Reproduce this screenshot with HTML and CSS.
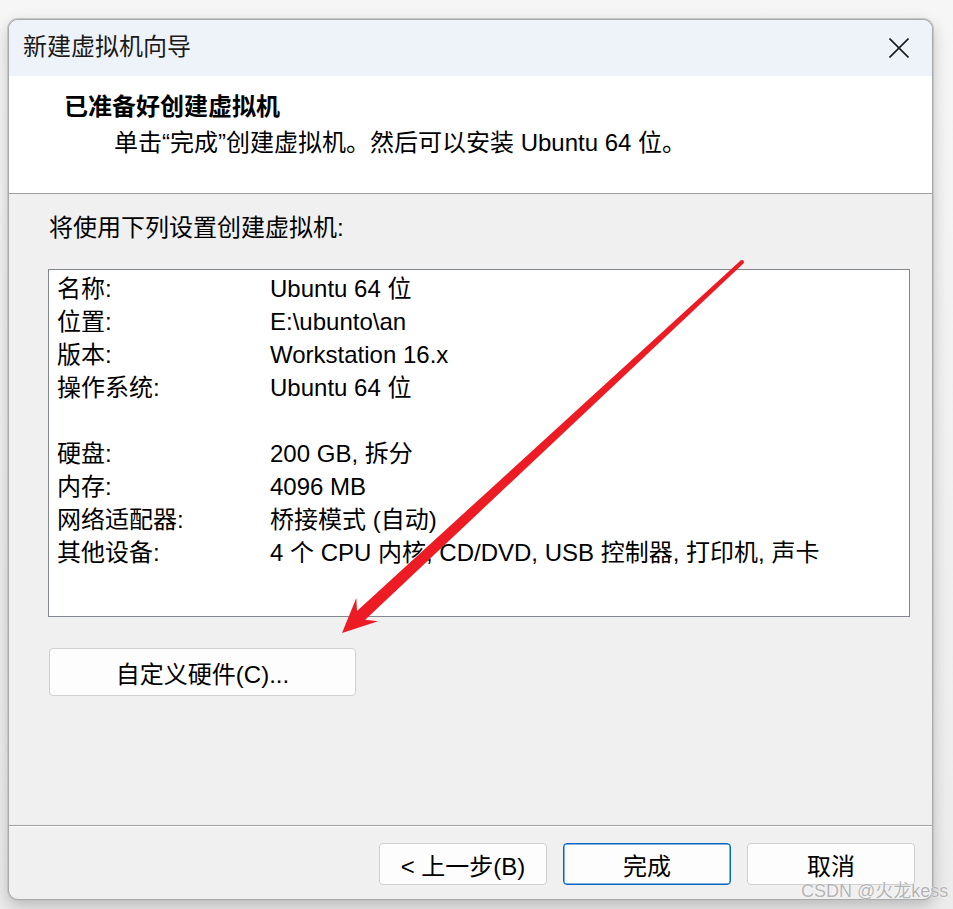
FILE: index.html
```html
<!DOCTYPE html>
<html lang="zh-CN">
<head>
<meta charset="utf-8">
<title>新建虚拟机向导</title>
<link rel="stylesheet" href="styles.css">
</head>
<body>
<div class="window">
  <div class="titlebar">
    <span class="title">新建虚拟机向导</span>
    <span class="close">
      <svg width="20" height="20" viewBox="0 0 20 20"><path d="M0.5 0.5 L19.5 19.5 M19.5 0.5 L0.5 19.5" stroke="#1a1a1a" stroke-width="1.6" fill="none"/></svg>
    </span>
  </div>
  <div class="header">
    <div class="h-title">已准备好创建虚拟机</div>
    <div class="h-sub">单击“完成”创建虚拟机。然后可以安装 Ubuntu 64 位。</div>
  </div>
  <div class="content">
    <div class="intro">将使用下列设置创建虚拟机:</div>
    <div class="listbox">
      <div class="lbl">名称:</div><div class="val">Ubuntu 64 位</div>
      <div class="lbl">位置:</div><div class="val">E:\ubunto\an</div>
      <div class="lbl">版本:</div><div class="val">Workstation 16.x</div>
      <div class="lbl">操作系统:</div><div class="val">Ubuntu 64 位</div>
      <div class="blank"></div>
      <div class="lbl">硬盘:</div><div class="val">200 GB, 拆分</div>
      <div class="lbl">内存:</div><div class="val">4096 MB</div>
      <div class="lbl">网络适配器:</div><div class="val">桥接模式 (自动)</div>
      <div class="lbl">其他设备:</div><div class="val">4 个 CPU 内核, CD/DVD, USB 控制器, 打印机, 声卡</div>
    </div>
    <div class="btn custom">自定义硬件(C)...</div>
  </div>
  <div class="footer">
    <div class="btn fbtn">&lt; 上一步(B)</div>
    <div class="btn fbtn primary">完成</div>
    <div class="btn fbtn">取消</div>
  </div>
</div>
<svg class="arrow" width="953" height="909" viewBox="0 0 953 909">
  <circle cx="742" cy="262" r="2" fill="#ed1c24"/>
  <polygon fill="#ed1c24" points="743.4,263.5 365.2,619.7 378.1,621.3 342,633 356.3,597.9 357.0,610.9 740.6,260.5"/>
</svg>
<div class="watermark">CSDN @火龙kess</div>
</body>
</html>
```
FILE: styles.css
```css
html, body {
  margin: 0;
  padding: 0;
}
body {
  width: 953px;
  height: 909px;
  overflow: hidden;
  position: relative;
  background: linear-gradient(#f6f6f6, #ececec);
  font-family: "Liberation Sans", "Noto Sans CJK SC", sans-serif;
  font-size: 24px;
  color: #000;
}
.window {
  margin: 19px 0 0 8px;
  width: 925px;
  height: 881px;
  box-sizing: border-box;
  border: 1px solid #a9a9a9;
  border-radius: 10px;
  background: #f0f0f0;
  display: flex;
  flex-direction: column;
  overflow: hidden;
  box-shadow: 0 0 0 1px #c4c4c4, 0 6px 16px rgba(0,0,0,0.22);
}
.titlebar {
  height: 56px;
  flex: none;
  background: #eef3fa;
  display: flex;
  align-items: center;
  justify-content: space-between;
  padding: 0 23px 0 14px;
}
.title {
  line-height: 30px;
  color: #1a1a1a;
  padding-bottom: 2px;
}
.close {
  width: 20px;
  height: 20px;
  display: flex;
}
.header {
  flex: none;
  background: #fff;
  border-bottom: 1px solid #a0a0a0;
  box-sizing: border-box;
  height: 118px;
  padding: 14px 0 0 55px;
}
.h-title {
  font-weight: bold;
  line-height: 34px;
}
.h-sub {
  line-height: 34px;
  margin-top: 2px;
  padding-left: 50px;
}
.content {
  flex: 1;
  padding: 17px 0 0 39px;
  border-bottom: 1px solid #a0a0a0;
}
.intro {
  line-height: 34px;
  padding-left: 1px;
}
.listbox {
  margin-top: 24px;
  width: 862px;
  height: 348px;
  box-sizing: border-box;
  border: 1px solid #828790;
  background: #fff;
  padding: 2px 0 0 8px;
  display: grid;
  grid-template-columns: 213px 1fr;
  grid-auto-rows: 33px;
  align-content: start;
}
.lbl, .val {
  line-height: 33px;
  white-space: nowrap;
}
.blank {
  grid-column: 1 / 3;
}
.btn {
  box-sizing: border-box;
  background: #fdfdfd;
  border: 1px solid #d0d0d0;
  border-radius: 4px;
  display: flex;
  align-items: center;
  justify-content: center;
  color: #000;
}
.custom {
  margin-top: 31px;
  margin-left: 1px;
  width: 307px;
  height: 48px;
}
.footer {
  height: 73px;
  flex: none;
  border-top: 1px solid #fff;
  box-sizing: border-box;
  display: flex;
  justify-content: flex-end;
  align-items: flex-start;
  gap: 16px;
  padding: 16px 17px 0 0;
}
.fbtn {
  width: 168px;
  height: 42px;
}
.primary {
  border-color: #0067c0;
  box-shadow: inset 0 0 0 0.5px #0067c0;
}
.arrow {
  position: absolute;
  left: 0;
  top: 0;
  pointer-events: none;
}
.watermark {
  position: absolute;
  left: 801px;
  top: 880px;
  font-size: 18px;
  line-height: 22px;
  color: rgba(165,165,165,0.85);
  text-shadow: 0 0 1px #fff, 0 0 1px #fff;
  white-space: nowrap;
  pointer-events: none;
}
```
